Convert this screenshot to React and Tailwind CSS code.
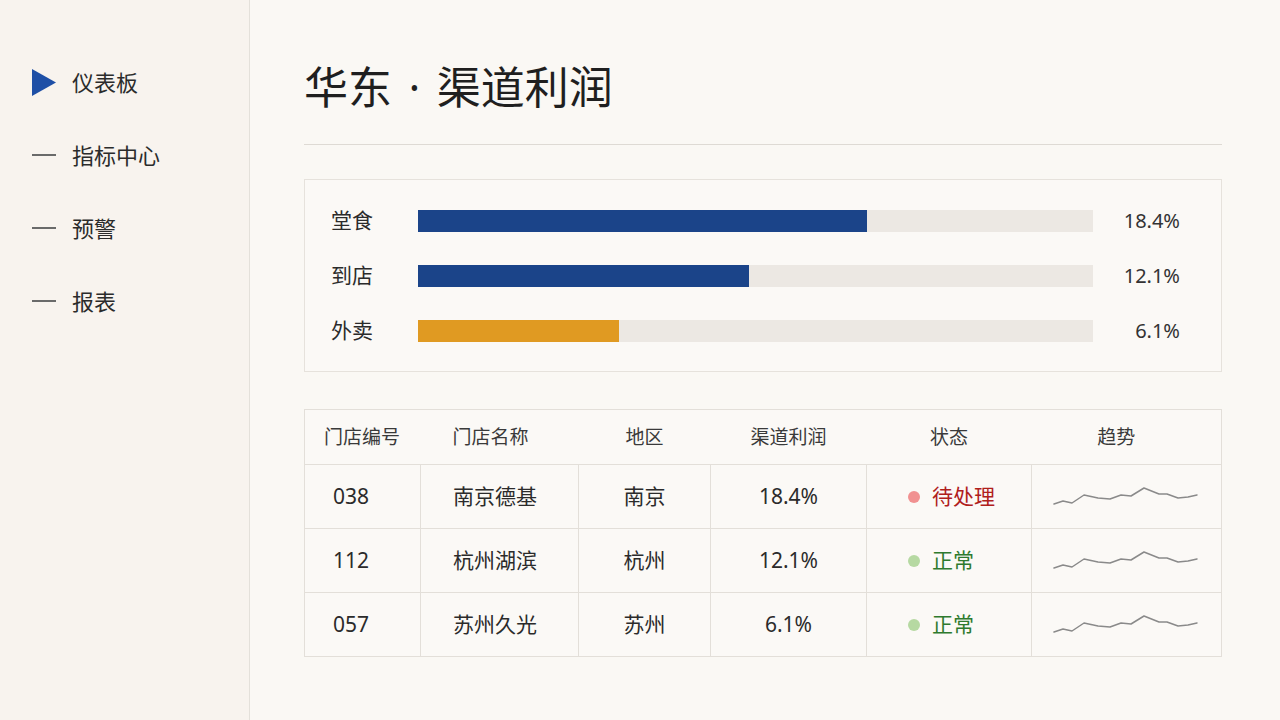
import React from "react";

const channels = [
  { label: "堂食", pct: 66.5, value: "18.4%", color: "bg-[#1b4489]" },
  { label: "到店", pct: 49.1, value: "12.1%", color: "bg-[#1b4489]" },
  { label: "外卖", pct: 29.8, value: "6.1%", color: "bg-[#e09a22]" },
];

const stores = [
  { id: "038", name: "南京德基", region: "南京", profit: "18.4%", status: "待处理", alert: true },
  { id: "112", name: "杭州湖滨", region: "杭州", profit: "12.1%", status: "正常", alert: false },
  { id: "057", name: "苏州久光", region: "苏州", profit: "6.1%", status: "正常", alert: false },
];

const navItems = ["仪表板", "指标中心", "预警", "报表"];

// trend line points, shared by every row
const trendPoints =
  "1,18 10,15 19,17 31,9 45,12 57,13 68,9 78,10 91,2 106,8 114,8 125,12 135,11 144,9";

function Sparkline() {
  return (
    <svg width="146" height="22" viewBox="0 0 146 22" className="block">
      <polyline
        points={trendPoints}
        fill="none"
        stroke="#8a8a8a"
        strokeWidth="1.5"
        strokeLinejoin="round"
        strokeLinecap="round"
      />
    </svg>
  );
}

function Sidebar() {
  return (
    <aside className="w-[250px] shrink-0 h-full bg-[#f8f3ee] border-r border-[#e4e0da]">
      <nav className="flex flex-col gap-[33px] pt-[62px]">
        {navItems.map((item, i) => (
          <div key={item} className="h-[40px] flex items-center pl-[32px]">
            <div className="w-[24px] h-[27px] flex items-center justify-center">
              {i === 0 ? (
                <svg width="24" height="27" viewBox="0 0 24 27">
                  <polygon points="0,0 24,13.5 0,27" fill="#1f4fa6" />
                </svg>
              ) : (
                <div className="w-[24px] h-[1.5px] bg-[#6a6a6a]" />
              )}
            </div>
            <span className="ml-[16px] text-[22px] text-[#2b2b2b]">{item}</span>
          </div>
        ))}
      </nav>
    </aside>
  );
}

function ChannelBars() {
  return (
    <section className="mt-[34px] border border-[#e6e2dc] bg-[#fbf9f6] py-[13px] pl-[26px] pr-[41px]">
      {channels.map((c) => (
        <div key={c.label} className="h-[55px] flex items-center">
          <div className="w-[87px] text-[21px] text-[#2b2b2b]">{c.label}</div>
          <div className="flex-1 h-[22px] bg-[#ece8e3]">
            <div className={`h-full ${c.color}`} style={{ width: `${c.pct}%` }} />
          </div>
          <div className="w-[87px] text-right text-[20px] text-[#333]">{c.value}</div>
        </div>
      ))}
    </section>
  );
}

function StoreTable() {
  return (
    <table className="mt-[37px] w-full table-fixed border-collapse border border-[#e3dfd9] bg-[#fbf9f6] text-[#2b2b2b]">
      <colgroup>
        <col className="w-[116px]" />
        <col className="w-[158px]" />
        <col className="w-[132px]" />
        <col className="w-[156px]" />
        <col className="w-[165px]" />
        <col className="w-[190px]" />
      </colgroup>
      <thead>
        <tr className="h-[55px] border-b border-[#e3dfd9] text-[19px] text-[#3a3a3a]">
          <th className="font-normal text-left pl-[19px]">门店编号</th>
          <th className="font-normal text-left pl-[32px]">门店名称</th>
          <th className="font-normal text-center">地区</th>
          <th className="font-normal text-center">渠道利润</th>
          <th className="font-normal text-center">状态</th>
          <th className="font-normal text-center pr-[20px]">趋势</th>
        </tr>
      </thead>
      <tbody className="text-[21px]">
        {stores.map((s) => (
          <tr key={s.id} className="h-[64px] border-b border-[#e3dfd9]">
            <td className="pl-[28px]">{s.id}</td>
            <td className="pl-[32px] border-l border-[#e3dfd9]">{s.name}</td>
            <td className="text-center border-l border-[#e3dfd9]">{s.region}</td>
            <td className="text-center border-l border-[#e3dfd9]">{s.profit}</td>
            <td className="pl-[41px] border-l border-[#e3dfd9]">
              <div className="flex items-center">
                <span
                  className={`w-[12px] h-[12px] rounded-full ${
                    s.alert ? "bg-[#f19191]" : "bg-[#b6d9a2]"
                  }`}
                />
                <span className={`ml-[12px] ${s.alert ? "text-[#b0201c]" : "text-[#2e7a2e]"}`}>
                  {s.status}
                </span>
              </div>
            </td>
            <td className="pl-[21px] border-l border-[#e3dfd9]">
              <Sparkline />
            </td>
          </tr>
        ))}
      </tbody>
    </table>
  );
}

export default function App() {
  return (
    <div
      className="w-[1280px] h-[720px] flex bg-[#faf8f4] overflow-hidden"
      style={{ fontFamily: '"Noto Sans", "Noto Sans CJK SC", sans-serif' }}
    >
      <Sidebar />
      <main className="flex-1 pl-[54px] pr-[59px] pt-[62px]">
        <h1 className="text-[44px] leading-[50px] font-normal text-[#1f1f1f]">
          华东 <span className="mx-[5px]">·</span> 渠道利润
        </h1>
        <div className="mt-[32px] h-px bg-[#dedad4]" />
        <ChannelBars />
        <StoreTable />
      </main>
    </div>
  );
}
